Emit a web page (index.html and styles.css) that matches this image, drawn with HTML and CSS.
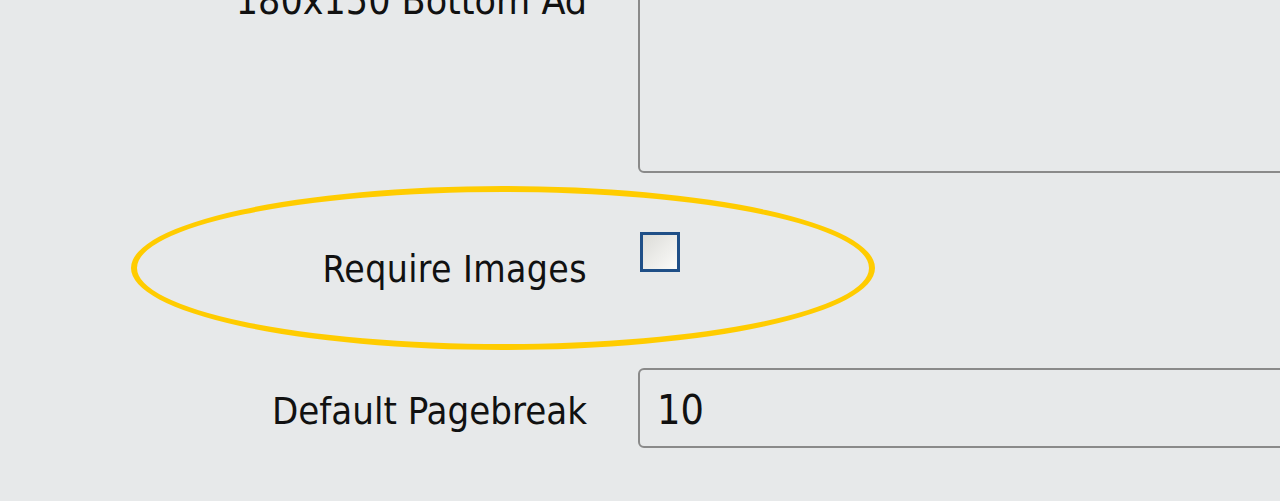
FILE: index.html
```html
<!DOCTYPE html>
<html lang="en">
<head>
  <meta charset="UTF-8">
  <title>Settings</title>
  <link rel="stylesheet" href="styles.css">
</head>
<body>
  <div class="form">
    <div class="row row-ad">
      <label class="label">180x150 Bottom Ad</label>
      <textarea class="area"></textarea>
    </div>

    <div class="row row-check">
      <label class="label">Require Images</label>
      <span class="check"></span>
      <div class="highlight"></div>
    </div>

    <div class="row row-page">
      <label class="label">Default Pagebreak</label>
      <input class="field" type="text" value="10">
    </div>
  </div>
</body>
</html>
```

FILE: styles.css
```css
* {
  box-sizing: border-box;
}

body {
  margin: 0;
  height: 501px;
  overflow: hidden;
  background: #e7e9ea;
  font-family: 'DejaVu Sans', sans-serif;
  font-stretch: condensed;
  color: #111;
}

.form {
  width: 1280px;
  overflow: hidden;
  margin-top: -22px;
}

.row {
  display: flex;
  gap: 51px;
  position: relative;
}

.label {
  flex: 0 0 587px;
  text-align: right;
  font-size: 37px;
}

.row-ad .label {
  font-size: 39px;
  line-height: 46px;
}

.area {
  flex: 0 0 700px;
  height: 195px;
  border: 2px solid #8a8a8a;
  border-radius: 6px;
  background: #e7e9ea;
  resize: none;
}

.row-check {
  margin-top: 59px;
  height: 80px;
}

.row-check .label {
  padding-top: 16px;
  line-height: 44px;
  letter-spacing: 0.4px;
}

.check {
  margin-left: 2px;
  width: 40px;
  height: 40px;
  border: 3px solid #1f4f87;
  background: linear-gradient(135deg, #dcdcd8, #fbfbf9);
}

.highlight {
  position: absolute;
  left: 131px;
  top: -46px;
  width: 744px;
  height: 164px;
  border: 6px solid #ffcc00;
  border-radius: 50%;
  pointer-events: none;
}

.row-page {
  margin-top: 56px;
}

.row-page .label {
  font-size: 38px;
  line-height: 86px;
}

.field {
  flex: 0 0 700px;
  height: 80px;
  border: 2px solid #8a8a8a;
  border-radius: 6px;
  background: #e7e9ea;
  padding: 4px 17px 0;
  font-family: 'DejaVu Sans', sans-serif;
  font-stretch: condensed;
  font-size: 41px;
  color: #111;
}
```
